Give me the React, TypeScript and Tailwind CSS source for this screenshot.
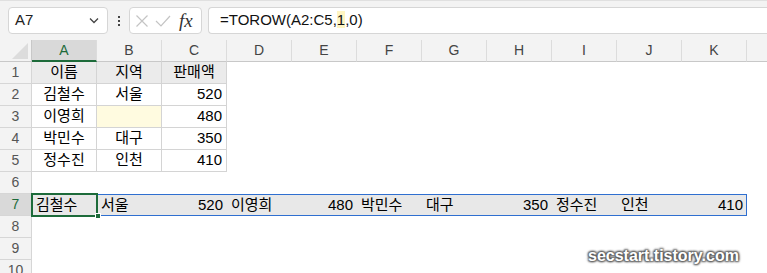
import React from 'react';

const FONT = '"Liberation Sans", "Noto Sans CJK KR", sans-serif';
const COLS = ['A', 'B', 'C', 'D', 'E', 'F', 'G', 'H', 'I', 'J', 'K'];

type Cell = { v: string; align: 'l' | 'c' | 'r'; fill?: string };

const table: Cell[][] = [
  [{ v: '이름', align: 'c' }, { v: '지역', align: 'c' }, { v: '판매액', align: 'c' }],
  [{ v: '김철수', align: 'c' }, { v: '서울', align: 'c' }, { v: '520', align: 'r' }],
  [{ v: '이영희', align: 'c' }, { v: '', align: 'c', fill: 'y' }, { v: '480', align: 'r' }],
  [{ v: '박민수', align: 'c' }, { v: '대구', align: 'c' }, { v: '350', align: 'r' }],
  [{ v: '정수진', align: 'c' }, { v: '인천', align: 'c' }, { v: '410', align: 'r' }],
];

const spill = ['김철수', '서울', '520', '이영희', '480', '박민수', '대구', '350', '정수진', '인천', '410'];

function RowHead({ n, active }: { n: number; active?: boolean }) {
  return (
    <div
      className={`w-[32px] shrink-0 flex items-center justify-center border-r border-b border-[#d6d6d6] text-[14px] ${
        active ? 'bg-[#d9d9d9] text-[#1d6b3a]' : 'bg-[#f3f3f3] text-[#555]'
      }`}
    >
      {n}
    </div>
  );
}

function Toolbar() {
  return (
    <div className="h-[40px] bg-[#f3f3f3] border-t border-[#e0e0e0] flex items-start pt-[6px]">
      <div className="ml-[8px] w-[100px] h-[27px] bg-white border border-[#d6d6d6] rounded-[4px] flex items-center justify-between px-[6px]">
        <span className="text-[15px] text-[#222]">A7</span>
        <svg width="10" height="7" viewBox="0 0 10 7" className="mr-[2px]">
          <path d="M1 1.5 L5 5.5 L9 1.5" fill="none" stroke="#444" strokeWidth="1.3" />
        </svg>
      </div>
      <div className="w-[21px] h-[27px] flex flex-col items-center justify-center gap-[2px]">
        <div className="w-[2px] h-[2px] bg-[#444]" />
        <div className="w-[2px] h-[2px] bg-[#444]" />
        <div className="w-[2px] h-[2px] bg-[#444]" />
      </div>
      <div className="w-[73px] h-[27px] bg-white border border-[#d6d6d6] rounded-[4px] flex items-center pl-[5px] gap-[6px]">
        <svg width="14" height="14" viewBox="0 0 14 14">
          <path d="M1.5 1.5 L12.5 12.5 M12.5 1.5 L1.5 12.5" stroke="#c4c4c4" strokeWidth="1.2" />
        </svg>
        <svg width="16" height="14" viewBox="0 0 16 14">
          <path d="M1 7 L6 12 L15 2" fill="none" stroke="#c4c4c4" strokeWidth="1.2" />
        </svg>
        <span className="text-[19px] italic text-[#333] leading-none ml-[2px]" style={{ fontFamily: '"Liberation Serif", serif' }}>
          fx
        </span>
      </div>
      <div className="ml-[6px] flex-1 h-[27px] bg-white border border-[#d6d6d6] border-r-0 rounded-l-[4px] flex items-center pl-[11px]">
        <span className="text-[15px] text-[#111]">
          =TOROW(A2:C5,<span className="bg-[#fff5c2]">1</span>,0)
        </span>
      </div>
    </div>
  );
}

function HeaderRow() {
  return (
    <div className="flex h-[22px]">
      <div className="w-[32px] shrink-0 bg-[#f3f3f3] border-r border-b border-[#c8c8c8] relative">
        <svg width="16" height="16" viewBox="0 0 16 16" className="absolute right-[3px] bottom-[2px]">
          <path d="M16 0 L16 16 L0 16 Z" fill="#dcdcdc" />
        </svg>
      </div>
      {COLS.map((c) => (
        <div
          key={c}
          className={`w-[65px] shrink-0 flex items-center justify-center text-[14px] border-r border-[#dcdcdc] ${
            c === 'A'
              ? 'bg-[#d9d9d9] text-[#1d6b3a] border-b-2 border-b-[#1d6b3a]'
              : 'bg-[#f3f3f3] text-[#444] border-b border-b-[#c8c8c8]'
          }`}
        >
          {c}
        </div>
      ))}
      <div className="flex-1 bg-[#f3f3f3] border-b border-[#c8c8c8]" />
    </div>
  );
}

export default function App() {
  return (
    <div className="w-[767px] h-[273px] overflow-hidden bg-white relative" style={{ fontFamily: FONT }}>
      <Toolbar />
      <HeaderRow />

      {table.map((row, i) => (
        <div key={i} className="flex h-[22px]">
          <RowHead n={i + 1} />
          {row.map((cell, j) => (
            <div
              key={j}
              className={`w-[65px] shrink-0 flex items-center px-[4px] text-[15px] text-black border-r border-b border-[#d4d4d4] ${
                cell.align === 'c' ? 'justify-center' : cell.align === 'r' ? 'justify-end' : 'justify-start'
              } ${i === 0 ? 'bg-[#ebebeb]' : cell.fill ? 'bg-[#fffbe0]' : 'bg-white'}`}
            >
              {cell.v}
            </div>
          ))}
        </div>
      ))}

      <div className="flex h-[22px]">
        <RowHead n={6} />
      </div>

      <div className="flex h-[22px] relative">
        <RowHead n={7} active />
        {spill.map((v, j) => (
          <div
            key={j}
            className={`w-[65px] shrink-0 flex items-center px-[4px] text-[15px] text-black bg-[#e8e8e8] ${
              /^\d+$/.test(v) ? 'justify-end' : 'justify-start'
            }`}
          >
            {v}
          </div>
        ))}
        <div className="absolute left-[32px] top-0 w-[715px] h-[22px] border border-[#2f6fd0] pointer-events-none" />
        <div className="absolute left-[31px] top-[-1px] w-[67px] h-[24px] border-2 border-[#1d6b3a] pointer-events-none" />
        <div className="absolute left-[95px] top-[19px] w-[6px] h-[6px] bg-[#1d6b3a] border border-white" />
      </div>

      {[8, 9, 10].map((n) => (
        <div key={n} className="flex h-[22px]">
          <RowHead n={n} />
        </div>
      ))}

      <div
        className="absolute left-[588px] top-[244px] text-[16px] font-bold text-white"
        style={{ fontFamily: '"Liberation Sans", sans-serif', textShadow: '1px 1px 2px #555, -1px -1px 2px #555, 1px -1px 2px #555, -1px 1px 2px #555' }}
      >
        secstart.tistory.com
      </div>
    </div>
  );
}
